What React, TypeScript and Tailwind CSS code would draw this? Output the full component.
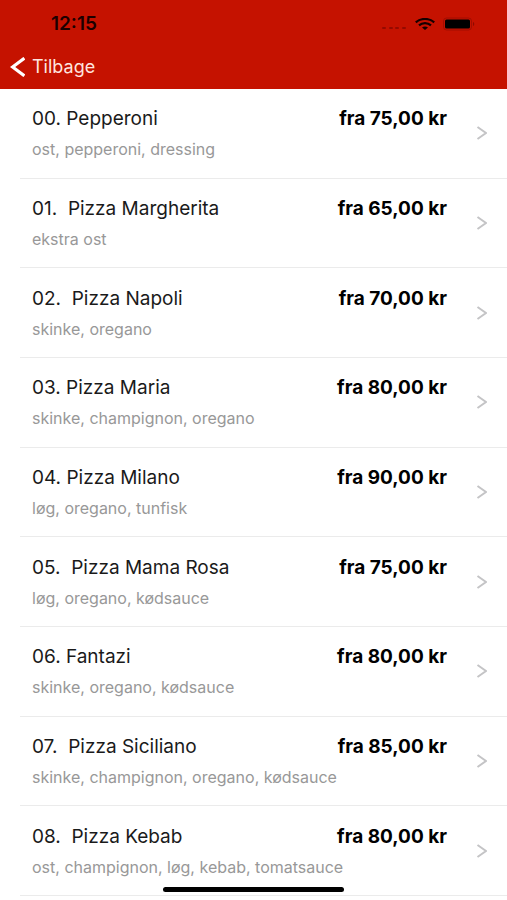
interface Pizza {
  name: string;
  toppings: string;
  price: string;
}

const menu: Pizza[] = [
  { name: "00. Pepperoni", toppings: "ost, pepperoni, dressing", price: "75,00" },
  { name: "01.  Pizza Margherita", toppings: "ekstra ost", price: "65,00" },
  { name: "02.  Pizza Napoli", toppings: "skinke, oregano", price: "70,00" },
  { name: "03. Pizza Maria", toppings: "skinke, champignon, oregano", price: "80,00" },
  { name: "04. Pizza Milano", toppings: "løg, oregano, tunfisk", price: "90,00" },
  { name: "05.  Pizza Mama Rosa", toppings: "løg, oregano, kødsauce", price: "75,00" },
  { name: "06. Fantazi", toppings: "skinke, oregano, kødsauce", price: "80,00" },
  { name: "07.  Pizza Siciliano", toppings: "skinke, champignon, oregano, kødsauce", price: "85,00" },
  { name: "08.  Pizza Kebab", toppings: "ost, champignon, løg, kebab, tomatsauce", price: "80,00" },
];

function StatusBar() {
  return (
    <div className="flex h-12 items-center justify-between pl-[51px] pr-8 text-[#1c0000]">
      <span className="text-[19px] leading-6 font-semibold">12:15</span>
      <div className="flex items-center gap-2">
        <svg width="26" height="12" viewBox="0 0 26 12" fill="#940a00" aria-hidden="true">
          <rect x="1" y="9" width="4" height="2" rx="1" />
          <rect x="8" y="9" width="4" height="2" rx="1" />
          <rect x="14" y="9" width="4" height="2" rx="1" />
          <rect x="21" y="9" width="4" height="2" rx="1" />
        </svg>
        <svg width="20" height="12" viewBox="0 0 20 12" fill="none" stroke="#140000" strokeWidth="2.2" aria-hidden="true">
          <path d="M0.8 4.4C5.8-0.2 14.2-0.2 19.2 4.4" />
          <path d="M4 7.4C7.4 4.4 12.6 4.4 16 7.4" />
          <path d="M7 9.6C8.8 8.2 11.2 8.2 13 9.6L10 12Z" fill="#140000" stroke="none" />
        </svg>
        <svg width="32" height="14" viewBox="0 0 32 14" aria-hidden="true">
          <rect x="0.5" y="1" width="28" height="12" rx="3" fill="none" stroke="#8c0a00" strokeOpacity="0.6" />
          <rect x="2" y="2.5" width="25" height="9" rx="1.5" fill="#000" />
          <path d="M30 5v4c1.6-.4 1.6-3.6 0-4z" fill="#8c0a00" />
        </svg>
      </div>
    </div>
  );
}

function MenuRow({ pizza }: { pizza: Pizza }) {
  return (
    <li className="ml-5 border-b border-[#ebebeb]">
      <a href="#" className="flex h-full items-center pl-3 pr-5">
        <div className="min-w-0 flex-1">
          <div className="flex items-baseline justify-between gap-4">
            <h2 className="text-[19px] leading-6 whitespace-pre text-[#1a1a1a]">{pizza.name}</h2>
            <p className="text-[19px] leading-6 font-bold whitespace-nowrap text-black">fra {pizza.price} kr</p>
          </div>
          <p className="mt-2 text-[16px] leading-5 text-[#989898]">{pizza.toppings}</p>
        </div>
        <svg className="ml-7 shrink-0" width="12" height="14" viewBox="0 0 12 14" fill="none" stroke="#c4c4c6" strokeWidth="2" aria-hidden="true">
          <path d="M2.5 1L11 7L2.5 13" />
        </svg>
      </a>
    </li>
  );
}

export default function App() {
  return (
    <div className="flex min-h-screen flex-col bg-white font-['Inter',sans-serif]">
      <header className="bg-[#c51200] pb-2">
        <StatusBar />
        <button type="button" className="flex h-[33px] items-center gap-[7px] pt-1 pl-[10px] text-white">
          <svg width="15" height="20" viewBox="0 0 15 20" fill="none" stroke="currentColor" strokeWidth="3.2" aria-hidden="true">
            <path d="M14.4 1.2L2.6 10L14.4 18.8" />
          </svg>
          <span className="text-[18px] leading-6 text-[#ffe4df]">Tilbage</span>
        </button>
      </header>

      <ul className="grid flex-1 auto-rows-fr pb-1">
        {menu.map((pizza) => (
          <MenuRow key={pizza.name} pizza={pizza} />
        ))}
      </ul>

      {/* Home indicator */}
      <div className="fixed inset-x-0 bottom-2 flex justify-center">
        <div className="h-[5px] w-[181px] rounded-full bg-black" />
      </div>
    </div>
  );
}
